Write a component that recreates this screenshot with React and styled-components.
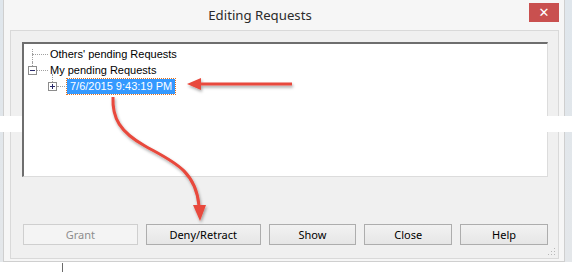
import React from 'react';
import styled, {createGlobalStyle} from 'styled-components';

const GlobalStyle = createGlobalStyle`
  html, body {
    margin: 0;
    padding: 0;
    background: #ffffff;
  }
`;

const Page = styled.div`
  position: relative;
  width: 572px;
  height: 272px;
  overflow: hidden;
  background: linear-gradient(to bottom, #dfe6ec 0, #e4e7ea 262px, #ffffff 262px);
`;

const Window = styled.div`
  margin-left: 3px;
  width: 562px;
  height: 262px;
  box-sizing: border-box;
  background: #f6f6f6;
  border: 1px solid #cfcfcf;
  border-top: none;
  display: flex;
  flex-direction: column;
`;

const TitleBar = styled.div`
  height: 30px;
  display: flex;
  align-items: flex-start;
  font-family: "Noto Sans", "Open Sans", sans-serif;
  font-size: 13.2px;
  color: #2b2b2b;
`;

const Title = styled.div`
  flex: 1;
  text-align: center;
  line-height: 30px;
`;

const CloseButton = styled.div`
  margin: 3px 5px 0 13px;
  width: 30px;
  height: 19px;
  background: #c9504f;
  color: #ffffff;
  display: flex;
  align-items: center;
  justify-content: center;
  font-family: "DejaVu Sans", sans-serif;
  font-size: 13px;
  font-weight: bold;
`;

const Client = styled.div`
  margin: 0 5px 0 6px;
  height: 229px;
  box-sizing: border-box;
  background: #f0f0f0;
  border: 1px solid #d9d9d9;
  padding: 11px 10px 0 11px;
  display: flex;
  flex-direction: column;
  position: relative;
`;

const TreeBox = styled.div`
  height: 135px;
  box-sizing: border-box;
  padding-top: 2px;
  background: #ffffff;
  border-top: 2px solid #6e6e6e;
  border-left: 2px solid #6e6e6e;
  border-right: 1px solid #dcdcdc;
  border-bottom: 1px solid #dcdcdc;
  display: flex;
  flex-direction: column;
  font-family: "Liberation Sans", Arial, sans-serif;
  font-size: 11px;
  color: #000;
`;

const TreeRow = styled.div`
  height: 16px;
  display: flex;
  align-items: center;
  padding-left: ${p => p.$indent}px;
`;

/* connector: optional expander + dotted line, with a vertical dotted segment */
const Connector = styled.div`
  position: relative;
  width: ${p => p.$width}px;
  height: 16px;
  display: flex;
  align-items: center;
  &::before {
    content: "";
    position: absolute;
    left: ${p => p.$vLeft}px;
    top: ${p => p.$vTop}px;
    height: ${p => p.$vHeight}px;
    border-left: 1px dotted #a0a0a0;
  }
`;

const Dots = styled.span`
  flex: 1;
  border-top: 1px dotted #a0a0a0;
`;

const Expander = styled.span`
  position: relative;
  z-index: 1;
  width: 7px;
  height: 7px;
  border: 1px solid #8c8c8c;
  background: #fff;
  &::before {
    content: "";
    position: absolute;
    left: 1px;
    top: 3px;
    width: 5px;
    height: 1px;
    background: #2a2a6a;
  }
  &::after {
    content: "";
    display: ${p => (p.$open ? 'none' : 'block')};
    position: absolute;
    left: 3px;
    top: 1px;
    width: 1px;
    height: 5px;
    background: #2a2a6a;
  }
`;

const Label = styled.span`
  padding: 1px 2px;
  line-height: 13px;
  ${p =>
    p.$selected &&
    `
    background: #3399ff;
    color: #ffffff;
    outline: 1px dotted #e07020;
    padding: 1px 3px;
  `}
`;

const ButtonRow = styled.div`
  margin-top: 47px;
  margin-left: 1px;
  display: flex;
  gap: 8px;
`;

const Button = styled.div`
  width: ${p => p.$w}px;
  height: 21px;
  box-sizing: border-box;
  border: 1px solid ${p => (p.$disabled ? '#cfcfcf' : '#adadad')};
  background: ${p => (p.$disabled ? '#f4f4f4' : 'linear-gradient(#f2f2f2, #e6e6e6)')};
  color: ${p => (p.$disabled ? '#8d8d8d' : '#000')};
  display: flex;
  align-items: center;
  justify-content: center;
  font-family: "Noto Sans", "Open Sans", sans-serif;
  font-size: 11px;
`;

const Grip = styled.div`
  position: absolute;
  right: 3px;
  bottom: 3px;
  width: 8px;
  height: 8px;
  background-image: radial-gradient(circle, #b8b8b8 0.8px, transparent 1px);
  background-size: 3px 3px;
  clip-path: polygon(100% 0, 100% 100%, 0 100%);
`;

const TornBand = styled.div`
  position: absolute;
  top: 116px;
  height: 16px;
  left: ${p => p.$left}px;
  width: ${p => p.$width}px;
  background: #ffffff;
`;

const BottomLine = styled.div`
  position: absolute;
  left: 62px;
  top: 263px;
  width: 1px;
  height: 9px;
  background: #6b6b6b;
`;

const Annotations = styled.svg`
  position: absolute;
  left: 0;
  top: 0;
  pointer-events: none;
`;

export default function App() {
  return (
    <>
      <GlobalStyle/>
      <Page>
        <Window>
          <TitleBar>
            <Title>Editing Requests</Title>
            <CloseButton>✕</CloseButton>
          </TitleBar>
          <Client>
            <TreeBox>
              <TreeRow $indent={8}>
                <Connector $width={16} $vLeft={0} $vTop={3} $vHeight={13}>
                  <Dots/>
                </Connector>
                <Label>Others' pending Requests</Label>
              </TreeRow>
              <TreeRow $indent={4}>
                <Connector $width={20} $vLeft={4} $vTop={0} $vHeight={4}>
                  <Expander $open/>
                  <Dots/>
                </Connector>
                <Label>My pending Requests</Label>
              </TreeRow>
              <TreeRow $indent={24}>
                <Connector $width={19} $vLeft={4} $vTop={-4} $vHeight={8}>
                  <Expander/>
                  <Dots/>
                </Connector>
                <Label $selected>7/6/2015 9:43:19 PM</Label>
              </TreeRow>
            </TreeBox>
            <ButtonRow>
              <Button $w={115} $disabled>Grant</Button>
              <Button $w={115}>Deny/Retract</Button>
              <Button $w={88}>Show</Button>
              <Button $w={88}>Close</Button>
              <Button $w={88}>Help</Button>
            </ButtonRow>
            <Grip/>
          </Client>
        </Window>
        <TornBand $left={0} $width={22}/>
        <TornBand $left={547} $width={25}/>
        <BottomLine/>
        <Annotations width="572" height="272" viewBox="0 0 572 272">
          <defs>
            <filter id="shadow" x="-20%" y="-50%" width="140%" height="200%">
              <feDropShadow dx="1" dy="2" stdDeviation="1.5" floodColor="#000" floodOpacity="0.35"/>
            </filter>
          </defs>
          <g filter="url(#shadow)" fill="#e8483c" stroke="#e8483c">
            <line x1="292" y1="84" x2="198" y2="84" strokeWidth="3"/>
            <polygon points="187,84 201,78 201,90" stroke="none"/>
            <path
              d="M113 97 C112 118, 120 132, 145 146 C172 161, 196 170, 199 206"
              fill="none"
              strokeWidth="3"
            />
            <polygon points="200,221 193,205 206,205" stroke="none"/>
          </g>
        </Annotations>
      </Page>
    </>
  );
}
